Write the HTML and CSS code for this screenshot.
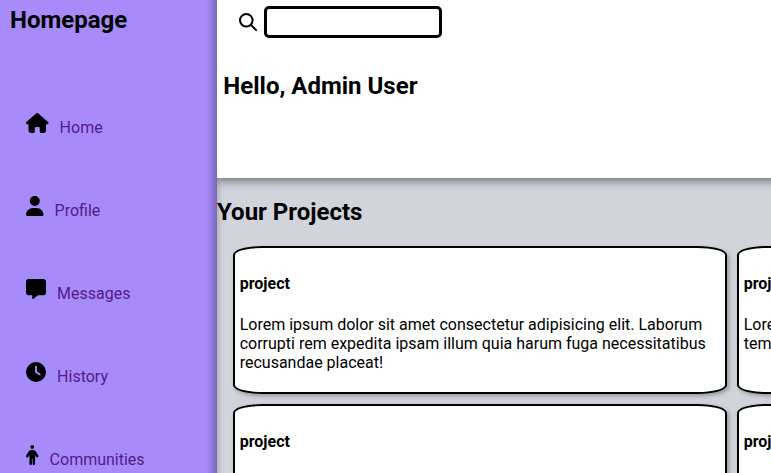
FILE: index.html
```html
<!DOCTYPE html>
<html lang="en">
<head>
<meta charset="utf-8">
<title>Homepage</title>
<link rel="stylesheet" href="styles.css">
</head>
<body>
<div class="layout">
  <aside class="sidebar">
    <h2 class="brand">Homepage</h2>
    <nav class="nav">
      <div class="item"><svg class="icon" viewBox="0 0 576 512" width="22.5" height="20"><path d="M575.800 255.500c0 18-15 32.100-32 32.100h-32l.7 160.200c0 35.300-28.700 64.200-64 64.200h-64c-17.700 0-32-14.300-32-32v-88c0-17.700-14.300-32-32-32h-64c-17.700 0-32 14.300-32 32v88c0 17.700-14.300 32-32 32h-64c-35.300 0-64-28.700-64-64V287.600H32c-18 0-32-14-32-32.100 0-9 3-17 10-24L266.400 8c7-7 15-8 22-8s15 2 21 7L564.800 231.500c8 7 12 15 11 24z"/></svg><a href="#">Home</a></div>
      <div class="item"><svg class="icon" viewBox="0 0 448 512" width="17.5" height="20"><path d="M224 256a128 128 0 1 0 0-256 128 128 0 1 0 0 256zm-45.700 48C79.800 304 0 383.800 0 482.300 0 498.700 13.300 512 29.700 512h388.600c16.400 0 29.700-13.300 29.700-29.700C448 383.800 368.200 304 269.700 304z"/></svg><a href="#">Profile</a></div>
      <div class="item"><svg class="icon" viewBox="0 0 512 512" width="20" height="20"><path d="M64 0C28.700 0 0 28.700 0 64v288c0 35.300 28.700 64 64 64h96v80c0 6.100 3.400 11.600 8.800 14.300s11.900 2.100 16.800-1.500L309.300 416H448c35.300 0 64-28.700 64-64V64c0-35.300-28.700-64-64-64z"/></svg><a href="#">Messages</a></div>
      <div class="item"><svg class="icon" viewBox="0 0 512 512" width="20" height="20"><path d="M256 0a256 256 0 1 1 0 512 256 256 0 1 1 0-512zM232 120v136c0 8 4 15.500 10.700 20l96 64c11 7.400 25.900 4.400 33.300-6.700s4.400-25.900-6.700-33.300L280 243.200V120c0-13.300-10.700-24-24-24s-24 10.700-24 24z"/></svg><a href="#">History</a></div>
      <div class="item"><svg class="icon" viewBox="0 0 320 512" width="12.5" height="20"><path d="M112 48a48 48 0 1 1 96 0 48 48 0 1 1-96 0zm40 304v128c0 17.700-14.300 32-32 32s-32-14.300-32-32V256.900L59.400 304.500c-9.100 15.100-28.800 20-43.900 10.900s-20-28.800-10.900-43.900l58.300-97c17.400-28.900 48.600-46.600 82.300-46.600h29.700c33.700 0 64.900 17.700 82.300 46.600l58.300 97c9.100 15.100 4.200 34.800-10.900 43.900s-34.800 4.200-43.900-10.900L232 256.900V480c0 17.700-14.300 32-32 32s-32-14.300-32-32V352z"/></svg><a href="#">Communities</a></div>
    </nav>
  </aside>
  <main class="main">
    <header class="header">
      <div class="search">
        <svg class="magnifier" viewBox="0 0 18 18" width="18" height="18"><circle cx="7.300" cy="7.300" r="6.300"/><path d="M11.900 11.900 17 17"/></svg>
        <input class="field" type="text" aria-label="Search">
      </div>
      <h2 class="greeting">Hello, Admin User</h2>
    </header>
    <section class="projects">
      <h2 class="heading">Your Projects</h2>
      <div class="cards">
        <article class="card"><h4>project</h4><p>Lorem ipsum dolor sit amet consectetur adipisicing elit. Laborum corrupti rem expedita ipsam illum quia harum fuga necessitatibus recusandae placeat!</p></article>
        <article class="card"><h4>project</h4><p>Lorem ipsum dolor sit amet consectetur adipisicing elit. Quisquam temporibus.</p></article>
        <article class="card"><h4>project</h4></article>
        <article class="card"><h4>project</h4></article>
      </div>
    </section>
  </main>
</div>
</body>
</html>
```
FILE: styles.css
```css
* { box-sizing: border-box; }
body { margin: 0; font: 16px/19px Roboto, sans-serif; color: #000; overflow: hidden; }
h2, h4, p { margin: 0; }
h2 { font-size: 24px; line-height: 28px; }
.layout { display: grid; grid-template-columns: 217px 1249px; height: 473px; overflow: hidden; }
.sidebar { background: linear-gradient(to left, rgba(0,0,0,.27), rgba(0,0,0,.2) 3px, rgba(0,0,0,.07) 7px, transparent 11px) #a78bfa; padding: 6px 10px 0; }
.nav { display: grid; grid-auto-rows: 83px; padding: 79px 0 0 16px; }
.item { display: flex; align-items: flex-start; gap: 11.100px; }
.item a { color: #551a8b; margin-top: 5px; text-decoration: none; }
.icon { flex: none; }
.main { display: grid; grid-template-rows: 178px 1fr; min-width: 0; height: 473px; }
.header { position: relative; background: #fff; box-shadow: 0 4px 8px rgba(0,0,0,.4); clip-path: inset(0 0 -20px 0); padding: 6px; }
.search { display: flex; align-items: center; gap: 7px; padding-left: 16px; }
.magnifier { fill: none; stroke: #000; stroke-width: 2; stroke-linecap: round; }
.field { width: 178px; height: 32px; border: 3px solid #000; border-radius: 5px; background: #fff; }
.greeting { margin-top: 34px; padding-left: .3px; }
.projects { background: #d1d5db; padding-top: 20px; box-shadow: inset 5px 0 5px -3px rgba(0,0,0,.18); }
.cards { display: grid; grid-template-columns: 494px 494px; grid-auto-rows: 148px; gap: 10px; padding: 20px 0 0 16px; }
.card { background: #fff; border: 2px solid #000; border-radius: 6%; padding: 26px 4.700px 0; box-shadow: 2px 2px 4px rgba(0,0,0,.3); }
.card p { margin-top: 22px; }
```
